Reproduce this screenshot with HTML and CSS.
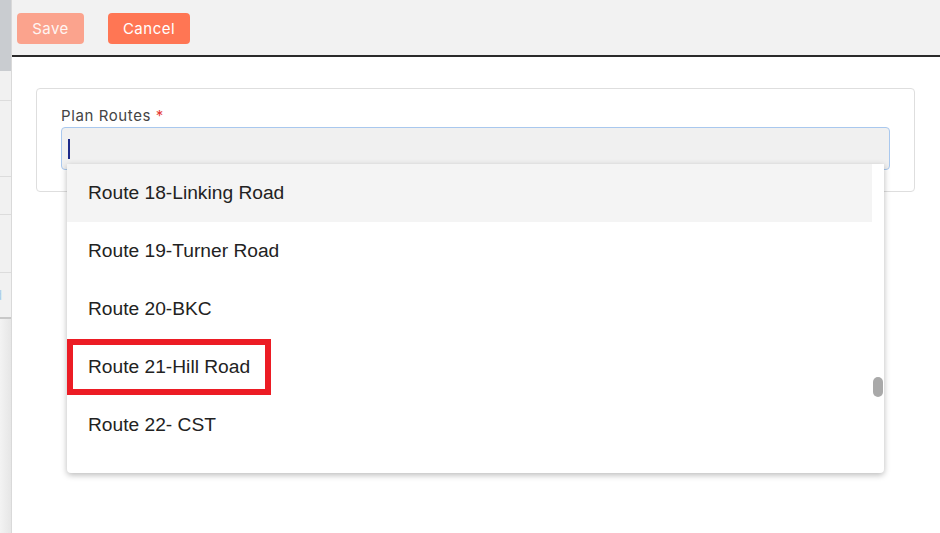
FILE: index.html
```html
<!DOCTYPE html>
<html>
<head>
<meta charset="utf-8">
<link rel="stylesheet" href="styles.css">
</head>
<body>
<div class="app">
  <aside class="sidebar">
    <div class="side-top"></div>
    <div class="side-row r1"></div>
    <div class="side-row r2"></div>
    <div class="side-row r3"></div>
    <div class="side-row r4"></div>
    <div class="side-row r5"><span class="side-link">d</span></div>
    <div class="side-rest"></div>
  </aside>
  <main class="main">
    <header class="toolbar">
      <button class="btn btn-save">Save</button>
      <button class="btn btn-cancel">Cancel</button>
    </header>
    <section class="content">
      <div class="card">
        <label class="label">Plan Routes <span class="req">*</span></label>
        <div class="field">
          <div class="input"><span class="caret"></span></div>
          <div class="dropdown">
            <ul class="options">
              <li class="option active">Route 18-Linking Road</li>
              <li class="option">Route 19-Turner Road</li>
              <li class="option">Route 20-BKC</li>
              <li class="option marked">Route 21-Hill Road<span class="mark"></span></li>
              <li class="option">Route 22- CST</li>
            </ul>
            <div class="scrollbar"><div class="thumb"></div></div>
          </div>
        </div>
      </div>
    </section>
  </main>
</div>
</body>
</html>
```
FILE: styles.css
```css
html, body {
  margin: 0;
  padding: 0;
  background: #ffffff;
}
body {
  width: 940px;
  height: 533px;
  overflow: hidden;
  font-family: "Inter", "Open Sans", sans-serif;
}
.app {
  display: flex;
  height: 533px;
}
.sidebar {
  width: 11px;
  flex: none;
  display: flex;
  flex-direction: column;
  background: #efefef;
  border-right: 1px solid #d9d9d9;
}
.side-top {
  height: 71px;
  background: #c9ccd0;
}
.side-row {
  border-bottom: 1px solid #dcdcdc;
  background: #f1f1f1;
}
.r1 { height: 29px; }
.r2 { height: 75px; }
.r3 { height: 37px; }
.r4 { height: 57px; }
.r5 {
  height: 44px;
  border-bottom: 2px solid #c8c8c8;
  overflow: hidden;
  display: flex;
  align-items: center;
}
.side-link {
  margin-left: -6px;
  font-size: 13px;
  color: #a9cdea;
}
.side-rest {
  flex: 1;
  background: linear-gradient(to right, #f3f3f3, #e6e6e6);
}
.main {
  flex: 1;
  display: flex;
  flex-direction: column;
}
.toolbar {
  background: #f2f2f2;
  border-bottom: 2px solid #2a2a2a;
  display: flex;
  align-items: flex-start;
  padding: 13px 0 0 5px;
  box-sizing: border-box;
  gap: 24px;
  height: 57px;
}
.btn {
  height: 31px;
  border: none;
  border-radius: 4px;
  color: #ffffff;
  font-family: "Inter", "Open Sans", sans-serif;
  font-size: 15px;
  letter-spacing: 0.5px;
  padding: 0;
}
.btn-save {
  width: 67px;
  background: #fba38d;
  color: #fff5f2;
}
.btn-cancel {
  width: 82px;
  background: #ff7654;
}
.content {
  padding: 31px 25px 0 24px;
}
.card {
  border: 1px solid #dedede;
  border-radius: 4px;
  padding: 17px 24px 0 24px;
  height: 85px;
}
.label {
  display: block;
  font-size: 15px;
  letter-spacing: 0.6px;
  color: #444444;
  line-height: 20px;
  height: 21px;
}
.req {
  color: #e53935;
}
.field {
  position: relative;
}
.input {
  height: 41px;
  background: #f0f0f0;
  border: 1px solid #a9c8ee;
  border-radius: 4px;
  position: relative;
}
.caret {
  position: absolute;
  left: 6px;
  top: 11px;
  width: 2px;
  height: 20px;
  background: #1d2a8a;
}
.dropdown {
  position: absolute;
  left: 6px;
  top: 37px;
  width: 817px;
  height: 309px;
  background: #ffffff;
  border-radius: 0 0 4px 4px;
  box-shadow: 0 2px 6px rgba(0, 0, 0, 0.28);
  display: flex;
  z-index: 5;
}
.options {
  list-style: none;
  margin: 0;
  padding: 0;
  flex: 1;
}
.option {
  height: 58px;
  line-height: 58px;
  padding-left: 21px;
  font-family: "Liberation Sans", Arial, sans-serif;
  font-size: 19.2px;
  color: #222222;
  position: relative;
}
.option.active {
  background: #f4f4f4;
}
.mark {
  position: absolute;
  left: 0;
  top: 1px;
  width: 192px;
  height: 44px;
  border: 6px solid #ec1c24;
}
.scrollbar {
  width: 12px;
  flex: none;
}
.thumb {
  margin: 213px 0 0 1px;
  width: 10px;
  height: 20px;
  border-radius: 5px;
  background: #a9a9a9;
}
```
